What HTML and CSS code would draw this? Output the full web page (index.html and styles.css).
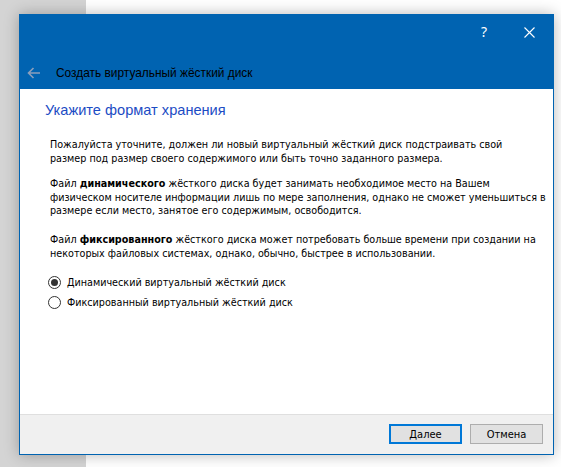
FILE: index.html
```html
<!DOCTYPE html>
<html lang="ru">
<head>
<meta charset="utf-8">
<link rel="stylesheet" href="styles.css">
</head>
<body>
<div class="dialog">
  <div class="titlebar">
    <div class="caption-buttons">
      <span class="help">?</span>
      <svg class="close" width="11" height="11" viewBox="0 0 11 11"><path d="M0.5 0.5 L10.5 10.5 M10.5 0.5 L0.5 10.5" stroke="#fff" stroke-width="1.1"/></svg>
    </div>
    <div class="title-row">
      <svg class="back" width="14" height="12" viewBox="0 0 14 12"><path d="M13 6 H1.5 M6.5 1 L1.5 6 L6.5 11" stroke="#8c9fbb" stroke-width="1.6" fill="none"/></svg>
      <span class="title">Создать виртуальный жёсткий диск</span>
    </div>
  </div>
  <div class="content">
    <h1 class="heading">Укажите формат хранения</h1>
    <p class="para intro">Пожалуйста уточните, должен ли новый виртуальный жёсткий диск подстраивать свой<br>размер под размер своего содержимого или быть точно заданного размера.</p>
    <p class="para">Файл <b>динамического</b> жёсткого диска будет занимать необходимое место на Вашем<br>физическом носителе информации лишь по мере заполнения, однако не сможет уменьшиться в<br>размере если место, занятое его содержимым, освободится.</p>
    <p class="para">Файл <b>фиксированного</b> жёсткого диска может потребовать больше времени при создании на<br>некоторых файловых системах, однако, обычно, быстрее в использовании.</p>
    <div class="options">
      <label class="option"><span class="radio checked"></span>Динамический виртуальный жёсткий диск</label>
      <label class="option"><span class="radio"></span>Фиксированный виртуальный жёсткий диск</label>
    </div>
  </div>
  <div class="footer">
    <button class="btn default">Далее</button>
    <button class="btn">Отмена</button>
  </div>
</div>
</body>
</html>
```
FILE: styles.css
```css
html, body {
  margin: 0;
  padding: 0;
}
body {
  width: 561px;
  height: 467px;
  overflow: hidden;
  background: linear-gradient(to right, #d4d4d4 86px, #ffffff 86px);
  font-family: "DejaVu Sans Condensed", "DejaVu Sans", sans-serif;
}
.dialog {
  margin: 14px 0 0 19px;
  width: 533px;
  height: 439px;
  border: 1px solid #0063b1;
  background: #fff;
  box-shadow: 0 0 14px rgba(0, 0, 0, 0.28);
  display: flex;
  flex-direction: column;
}
.titlebar {
  background: #0063b1;
  height: 74px;
  display: flex;
  flex-direction: column;
}
.caption-buttons {
  height: 30px;
  display: flex;
  justify-content: flex-end;
  align-items: center;
  gap: 37px;
  padding-right: 18px;
  padding-top: 2px;
}
.help {
  color: #fff;
  font-family: "Noto Sans", sans-serif;
  font-size: 14px;
  line-height: 14px;
}
.close {
  display: block;
}
.title-row {
  display: flex;
  align-items: center;
  padding-left: 7px;
  margin-top: 19px;
}
.back {
  display: block;
}
.title {
  margin-left: 15px;
  font-family: "Liberation Sans", Arial, sans-serif;
  font-size: 11.9px;
  color: #000;
}
.content {
  flex: 1;
  padding: 12px 0 0 25px;
}
.heading {
  margin: 0 0 19px 0;
  font-family: "Liberation Sans", Arial, sans-serif;
  font-weight: normal;
  font-size: 14.6px;
  line-height: 18px;
  color: #1c4cc4;
}
.para {
  margin: 0 0 15.5px 5px;
  font-size: 10.7px;
  line-height: 13.5px;
  white-space: nowrap;
  color: #000;
}
.para.intro {
  margin-bottom: 12px;
}
.para b {
  font-weight: bold;
}
.options {
  margin: 6px 0 0 3px;
  display: flex;
  flex-direction: column;
  gap: 6px;
}
.option {
  display: flex;
  align-items: center;
  font-size: 10.7px;
  line-height: 14px;
  color: #000;
}
.radio {
  box-sizing: border-box;
  width: 13px;
  height: 13px;
  border: 1px solid #333;
  border-radius: 50%;
  margin-right: 6px;
  display: flex;
  align-items: center;
  justify-content: center;
  background: #fff;
}
.radio.checked::after {
  content: "";
  width: 7px;
  height: 7px;
  border-radius: 50%;
  background: #333;
}
.footer {
  height: 40px;
  border-top: 1px solid #dfdfdf;
  background: #f0f0f0;
  display: flex;
  justify-content: flex-end;
  align-items: flex-start;
  padding: 9px 10px 0 0;
  box-sizing: border-box;
  gap: 8px;
}
.btn {
  box-sizing: border-box;
  width: 73px;
  height: 20px;
  border: 1px solid #adadad;
  background: #e1e1e1;
  font-family: "DejaVu Sans Condensed", "DejaVu Sans", sans-serif;
  font-size: 11px;
  color: #000;
  padding: 0;
}
.btn.default {
  border: 2px solid #0078d7;
}
```
